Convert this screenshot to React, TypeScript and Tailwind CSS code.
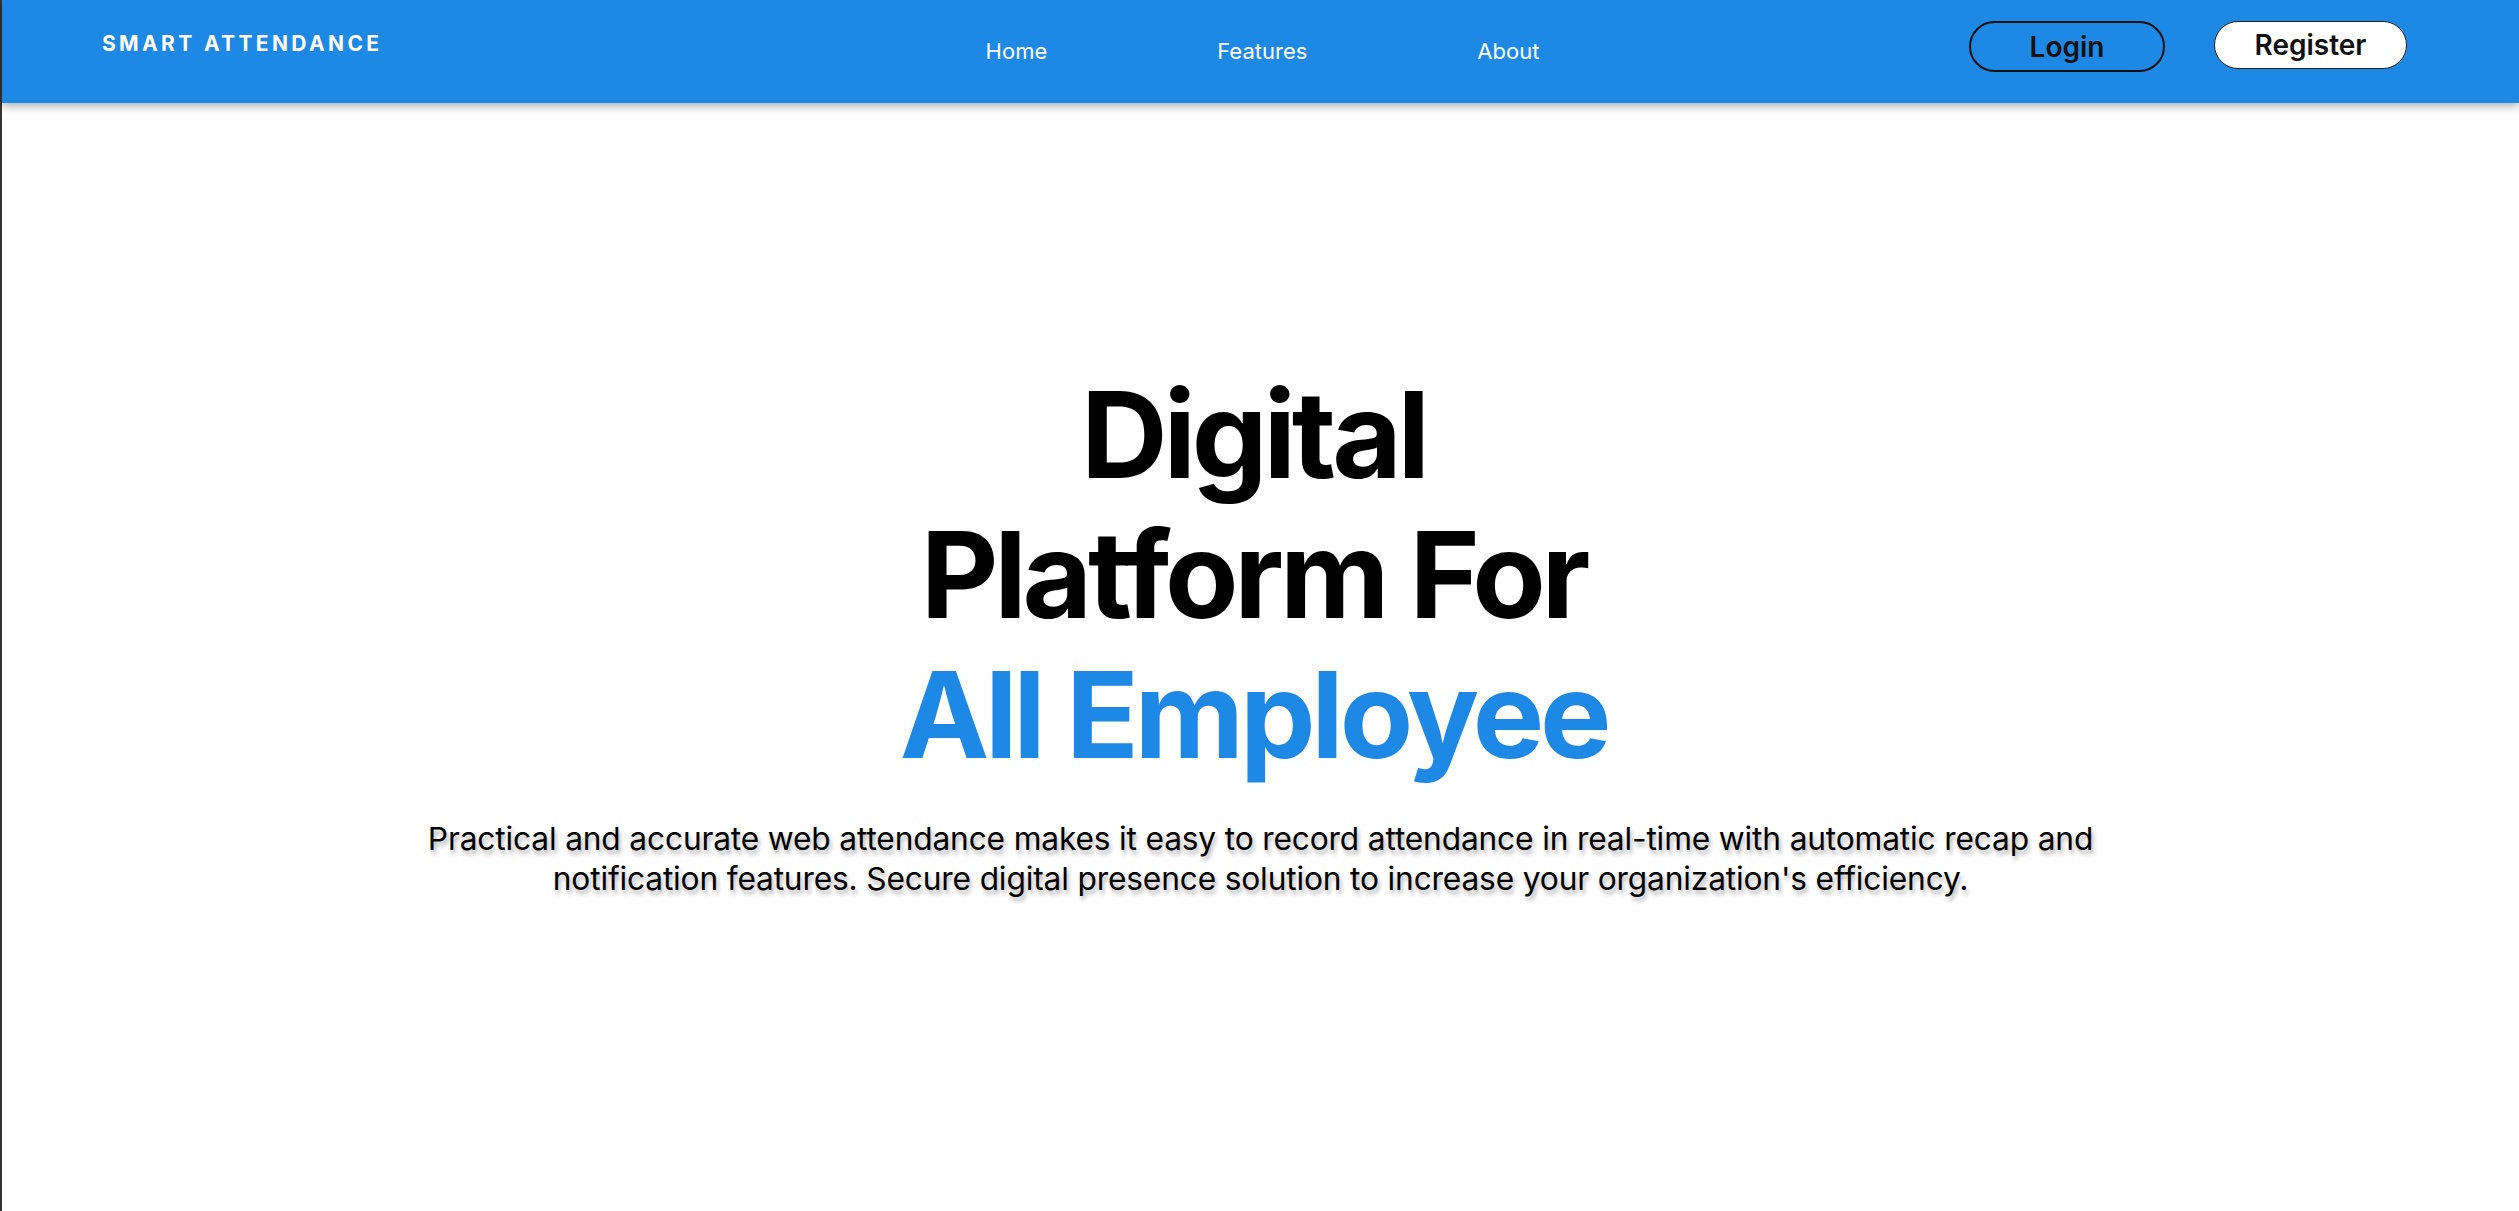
import { useState } from 'react';

const links = ['Home', 'Features', 'About'];

function Navbar() {
    const [active, setActive] = useState('Home');

    return (
        <header className="relative z-10 grid h-[103px] grid-cols-[1fr_auto_1fr] bg-[#1e88e5] pl-[100px] pr-[112px] shadow-[0_4px_8px_rgba(0,0,0,0.28)]">
            {/* brand */}
            <div className="pt-[28px]">
                <span className="text-[21px] font-bold tracking-[0.16em] text-white">SMART ATTENDANCE</span>
            </div>

            <nav className="ml-[16px] flex items-center gap-[170px]">
                {links.map((link) => (
                    <a
                        key={link}
                        href="#"
                        onClick={() => setActive(link)}
                        className={`text-[22px] font-normal text-white ${active === link ? '' : ''}`}
                    >
                        {link}
                    </a>
                ))}
            </nav>

            <div className="flex items-start justify-end gap-[49px] pt-[21px]">
                <button className="h-[51px] w-[196px] rounded-full border-2 border-[#111] text-[28px] font-semibold text-[#111]">
                    Login
                </button>
                <button className="h-[48px] w-[193px] rounded-full border border-[#222] bg-white text-[28px] font-semibold text-[#111]">
                    Register
                </button>
            </div>
        </header>
    );
}

function Hero() {
    return (
        <section className="flex flex-col items-center pt-[262px] text-center">
            <h1 className="pr-[14px] text-[120px] font-bold leading-[140px] tracking-[-0.035em] text-black">
                Digital
                <br />
                Platform For
                <br />
                <span className="text-[#1e88e5]">All Employee</span>
            </h1>
            <p className="mt-[34px] text-[31.7px] leading-[40px] tracking-[-0.005em] text-black [text-shadow:2px_4px_4px_rgba(0,0,0,0.3)]">
                Practical and accurate web attendance makes it easy to record attendance in real-time with automatic recap and
                <br />
                notification features. Secure digital presence solution to increase your organization's efficiency.
            </p>
        </section>
    );
}

export default function App() {
    return (
        <div className="min-h-[1211px] border-l-2 border-[#333] bg-white font-['Inter',sans-serif]">
            <Navbar />
            <Hero />
        </div>
    );
}
